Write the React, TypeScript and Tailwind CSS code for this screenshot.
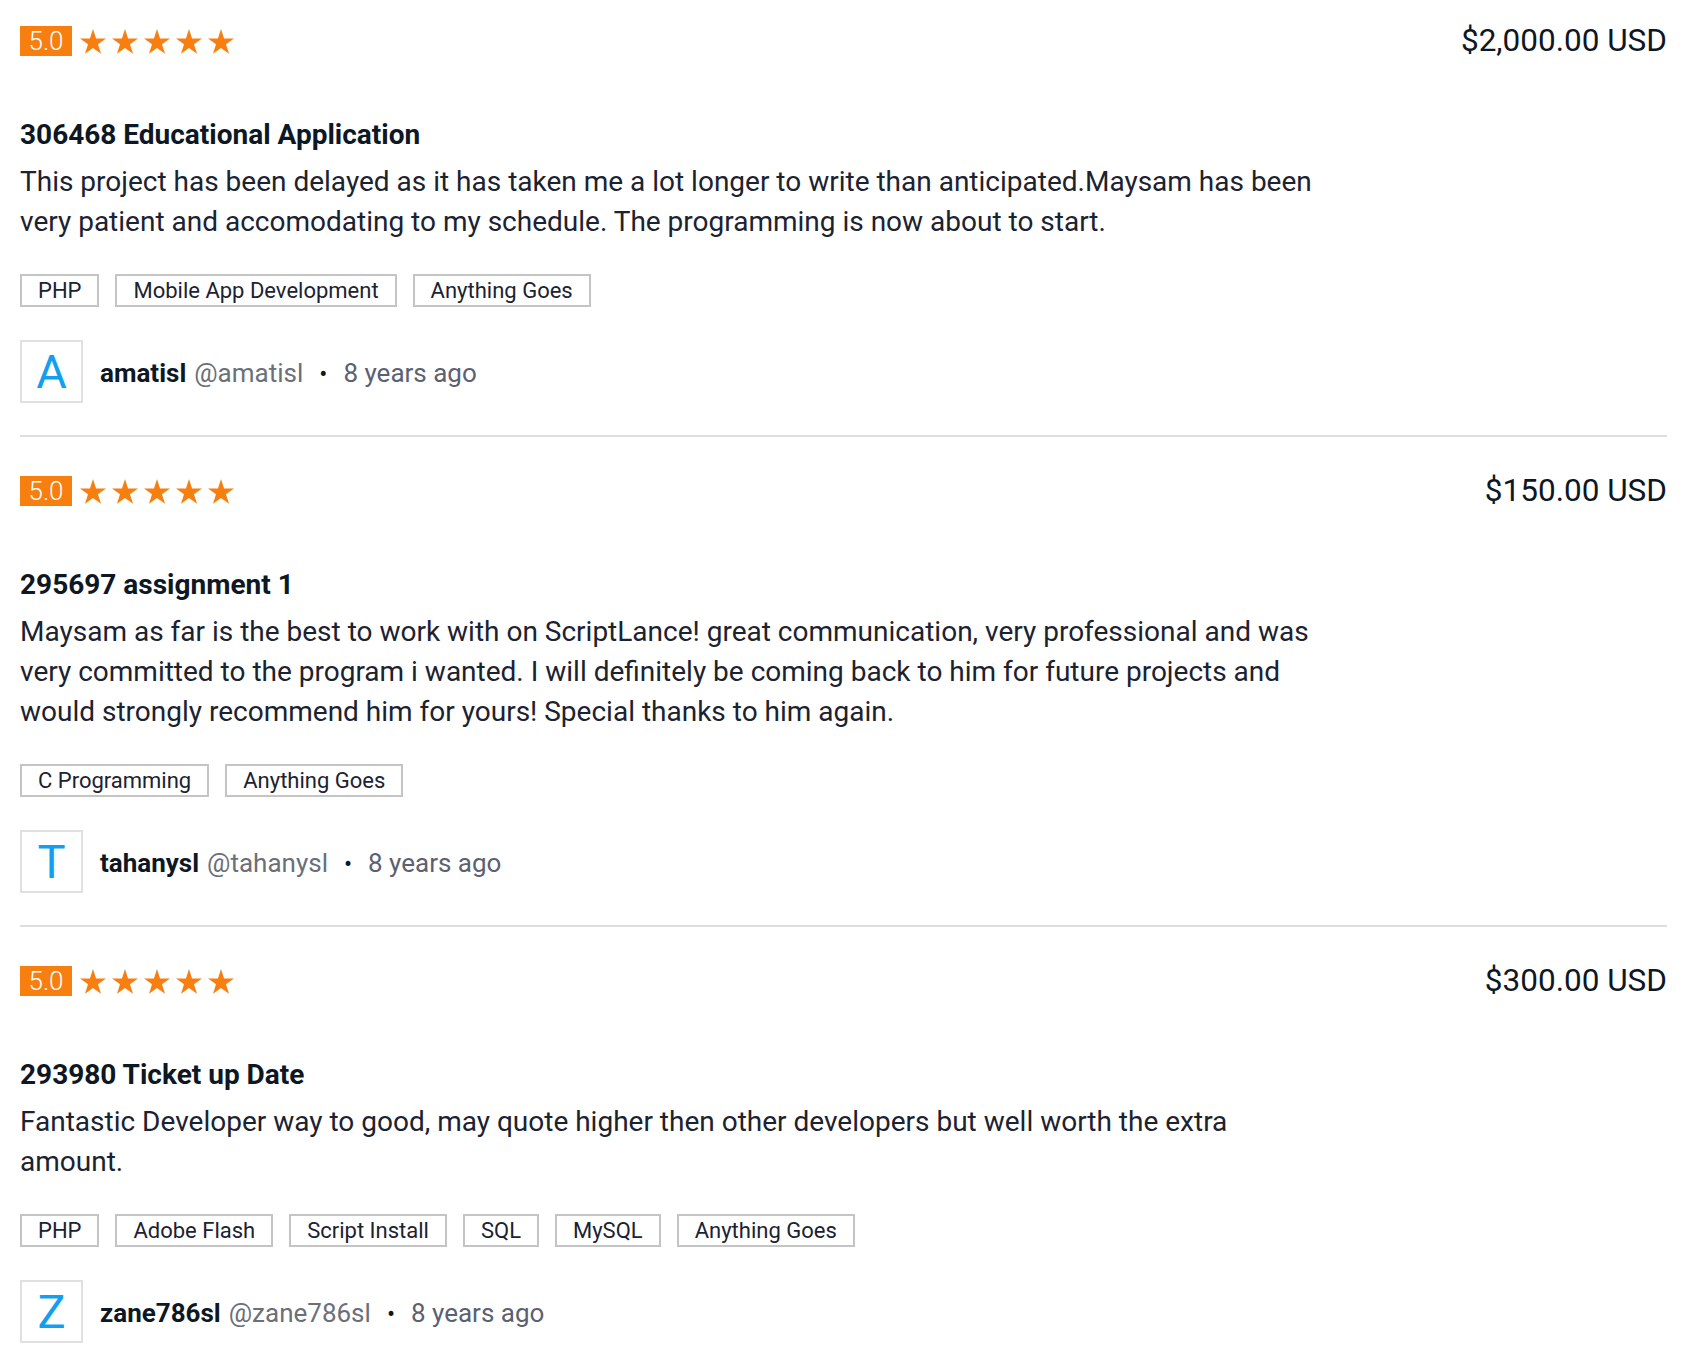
import React from "react";

type Review = {
  price: string;
  title: string;
  body: string;
  tags: string[];
  name: string;
  handle: string;
  initial: string;
  when: string;
};

const REVIEWS: Review[] = [
  {
    price: "$2,000.00 USD",
    title: "306468 Educational Application",
    body: "This project has been delayed as it has taken me a lot longer to write than anticipated.Maysam has been very patient and accomodating to my schedule. The programming is now about to start.",
    tags: ["PHP", "Mobile App Development", "Anything Goes"],
    name: "amatisl",
    handle: "@amatisl",
    initial: "A",
    when: "8 years ago",
  },
  {
    price: "$150.00 USD",
    title: "295697 assignment 1",
    body: "Maysam as far is the best to work with on ScriptLance! great communication, very professional and was very committed to the program i wanted. I will definitely be coming back to him for future projects and would strongly recommend him for yours! Special thanks to him again.",
    tags: ["C Programming", "Anything Goes"],
    name: "tahanysl",
    handle: "@tahanysl",
    initial: "T",
    when: "8 years ago",
  },
  {
    price: "$300.00 USD",
    title: "293980 Ticket up Date",
    body: "Fantastic Developer way to good, may quote higher then other developers but well worth the extra amount.",
    tags: ["PHP", "Adobe Flash", "Script Install", "SQL", "MySQL", "Anything Goes"],
    name: "zane786sl",
    handle: "@zane786sl",
    initial: "Z",
    when: "8 years ago",
  },
];

function Star() {
  return (
    <svg width="26" height="25" viewBox="0 0 26 25" className="shrink-0">
      <path
        d="M13 0L16.07 9.45L26 9.45L17.96 15.28L21.04 24.73L13 18.89L4.96 24.73L8.04 15.28L0 9.45L9.93 9.45Z"
        fill="#f77f0f"
      />
    </svg>
  );
}

function ReviewItem({ r, last }: { r: Review; last: boolean }) {
  return (
    <div className={last ? "pt-[26px]" : "pt-[26px] pb-[32px] border-b-2 border-[#dedede]"}>
      <div className="flex h-[30px] items-center justify-between">
        <div className="flex items-center">
          <span className="flex h-[30px] w-[52px] items-center justify-center bg-[#f77f0f] text-[26px] font-light leading-none text-white">
            5.0
          </span>
          <div className="ml-[8px] flex items-center gap-[6px]">
            {[0, 1, 2, 3, 4].map((i) => (
              <Star key={i} />
            ))}
          </div>
        </div>
        <span className="text-[31.5px] leading-[30px] text-[#0e1724]">{r.price}</span>
      </div>

      <h3 className="mt-[61px] text-[28px] font-bold leading-[36px] text-[#0e1724]">{r.title}</h3>
      <p className="mt-[9px] max-w-[1305px] text-[28px] leading-[40px] text-[#1b2230]">{r.body}</p>

      <div className="mt-[32px] flex flex-wrap gap-[16px]">
        {r.tags.map((t) => (
          <span
            key={t}
            className="flex h-[33px] items-center border-2 border-[#c4c4c4] px-[16px] text-[22px] text-[#1b2230]"
          >
            {t}
          </span>
        ))}
      </div>

      <div className="mt-[33px] flex items-center">
        <div className="flex h-[63px] w-[63px] items-center justify-center border-2 border-[#e0e0e0] text-[47px] leading-none text-[#139ff0]">
          {r.initial}
        </div>
        <div className="ml-[17px] flex items-center pt-[4px] text-[26px]">
          <span className="font-bold text-[#0e1724]">{r.name}</span>
          <span className="ml-[8px] text-[#6b6f78]">{r.handle}</span>
          <span className="mx-[16px] text-[24px] text-[#0e1724]">•</span>
          <span className="text-[#5b6170]">{r.when}</span>
        </div>
      </div>
    </div>
  );
}

export default function App() {
  return (
    <div className="min-h-[1360px] bg-white pl-[20px] pr-[25px] font-['Roboto',_sans-serif]">
      {REVIEWS.map((r, i) => (
        <div key={r.title} className={i > 0 ? "mt-[13px]" : ""}>
          <ReviewItem r={r} last={i === REVIEWS.length - 1} />
        </div>
      ))}
    </div>
  );
}
